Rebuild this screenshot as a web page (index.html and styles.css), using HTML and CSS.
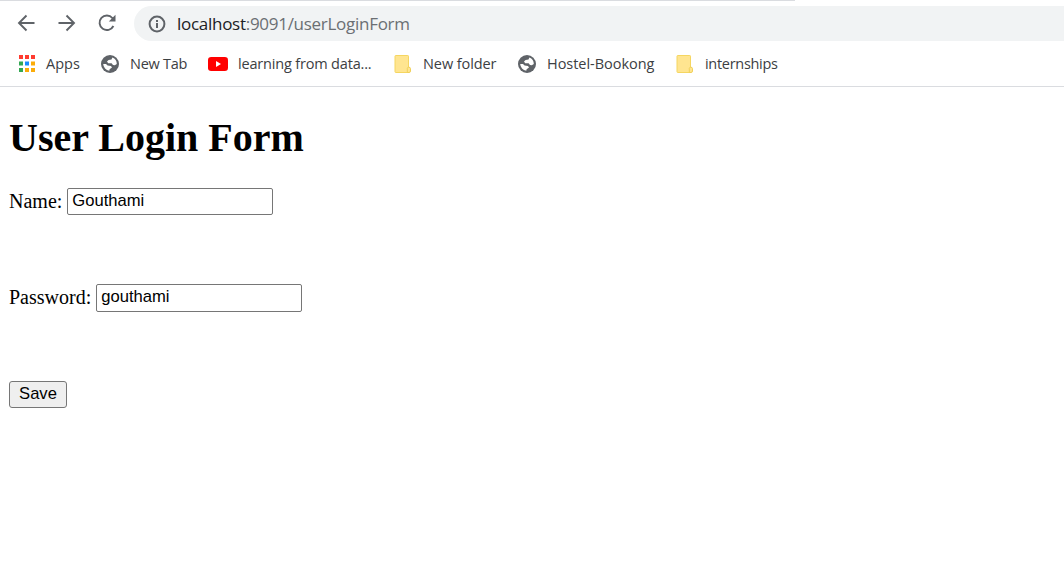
FILE: index.html
```html
<!DOCTYPE html>
<html lang="en">
<head>
<meta charset="utf-8">
<title>User Login Form</title>
<link rel="stylesheet" href="styles.css">
</head>
<body>
<svg class="defs" width="0" height="0" aria-hidden="true">
  <symbol id="globe" viewBox="0 0 18 18">
    <circle cx="9" cy="9" r="9" fill="#5f6368"/>
    <path d="M11.400 2.600 10.500 4.400 7.600 4.900 6 6.500 7.200 8.200H10.600L12 9.900 13.800 10.200 15.800 9A7 7 0 0 0 11.400 2.600ZM2.200 9A7 7 0 0 0 8.300 15.700L8.600 14.200 11 12.600 10 10.900 6.600 10.500 5 9Z" fill="#fff"/>
  </symbol>
  <symbol id="folder" viewBox="0 0 18 18">
    <path d="M1.700.5H13.800a.7.7 0 0 1 .7.7V17.500H1.700a.7.7 0 0 1-.7-.7V1.200a.7.7 0 0 1 .7-.7Z" fill="#ffe590" stroke="#f5d661"/>
    <path d="M13.300 17.500v-4.200q.2-1 1.400-1.200 1.800.2 1.800 1.400v2.500q0 1.500-1.500 1.500Z" fill="#ffe590" stroke="#f0d05a"/>
  </symbol>
</svg>
<header class="browser">
  <div class="tab-edge"></div>
  <div class="toolbar">
    <svg class="nav" viewBox="0 0 20 20"><path d="M17.500 9H2.500M9.500 1.500 2 9l7.500 7.500"/></svg>
    <svg class="nav" viewBox="0 0 20 20"><path d="M1.500 9h15M9.500 1.500 17 9 9.500 16.500"/></svg>
    <svg class="nav" viewBox="0 0 20 20"><path d="M16.400 12A7.300 7.300 0 1 1 15.400 4L17 5.600"/><path class="tip" d="M18.500.8V7.500H11.800Z"/></svg>
    <div class="address">
      <svg class="info" viewBox="0 0 18 18"><circle cx="9" cy="9" r="7.400"/><path d="M9 8v5M9 5v2"/></svg>
      <span class="url"><span class="host">localhost</span>:9091/userLoginForm</span>
    </div>
  </div>
  <nav class="bookmarks">
    <div class="bookmark apps">
      <svg class="icon" viewBox="0 0 18 18"><path fill="#ff3b30" d="M1 0h4v4H1zM7 0h4v4H7zM13 0h4v4h-4z"/><path fill="#34a853" d="M1 6.500h4v4H1zM1 13h4v4H1z"/><path fill="#1a8cff" d="M7 6.500h4v4H7z"/><path fill="#fbac09" d="M13 6.500h4v4h-4zM7 13h4v4H7zM13 13h4v4h-4z"/></svg>
      <span>Apps</span>
    </div>
    <div class="bookmark newtab"><svg class="icon"><use href="#globe"/></svg><span>New Tab</span></div>
    <div class="bookmark video">
      <svg class="icon wide" viewBox="0 0 20 14"><rect width="20" height="14" rx="3.200" fill="#f00"/><path d="M8 4v6l5-3z" fill="#fff"/></svg>
      <span>learning from data...</span>
    </div>
    <div class="bookmark newfolder"><svg class="icon"><use href="#folder"/></svg><span>New folder</span></div>
    <div class="bookmark hostel"><svg class="icon"><use href="#globe"/></svg><span>Hostel-Bookong</span></div>
    <div class="bookmark intern"><svg class="icon"><use href="#folder"/></svg><span>internships</span></div>
  </nav>
</header>
<main class="page">
  <h1>User Login Form</h1>
  <form>
    <div class="field"><label for="name">Name:</label><input id="name" type="text" value="Gouthami"></div>
    <div class="field second"><label for="password">Password:</label><input id="password" type="text" value="gouthami"></div>
    <button type="button">Save</button>
  </form>
</main>
</body>
</html>
```

FILE: styles.css
```css
* { box-sizing: border-box; }
body { margin: 0; height: 561px; overflow: hidden; background: #fff; color: #000; }
.defs { position: absolute; }
.browser { height: 87px; border-bottom: 1px solid #dadce0; font-family: "Open Sans", sans-serif; }
.tab-edge { width: 795px; height: 1px; background: #dadce0; }
.toolbar { display: flex; align-items: center; height: 45px; padding: 0 0 0 17px; }
.nav { width: 20px; height: 20px; margin-right: 20px; fill: none; stroke: #5f6368; stroke-width: 1.9; }
.nav .tip { fill: #5f6368; stroke: none; }
.address { display: flex; align-items: center; flex: 1; height: 35px; margin-left: -3px; padding-left: 14px; background: #f1f3f4; border-radius: 18px 0 0 18px; }
.info { width: 18px; height: 18px; margin-right: 11px; fill: none; stroke: #5f6368; stroke-width: 2; }
.url { font-size: 17px; letter-spacing: -0.28px; color: #6b6f73; white-space: nowrap; }
.host { color: #202124; }
.bookmarks { display: flex; height: 36px; padding-left: 18px; }
.bookmark { display: flex; align-items: center; flex: none; gap: 11px; font-size: 14.5px; letter-spacing: -0.18px; color: #3c4043; white-space: nowrap; }
.bookmark span { padding-bottom: 2px; }
.icon { flex: none; width: 18px; height: 18px; }
.wide { width: 20px; height: 14px; }
.apps { width: 83px; gap: 10px; letter-spacing: 0; }
.newtab { width: 107px; letter-spacing: -0.28px; }
.video { width: 186px; gap: 10px; }
.newfolder { width: 124px; letter-spacing: -0.08px; }
.hostel { width: 158px; letter-spacing: -0.03px; }
.intern { letter-spacing: -0.3px; }
.page { padding: 0 9px; font-family: "Liberation Serif", serif; font-size: 20px; }
h1 { margin: 27px 0 0; font-size: 40px; line-height: 48px; }
form { padding-top: 26px; }
.field { display: flex; height: 27px; gap: 5px; }
.field label { line-height: 27px; }
.second { height: 28px; margin: 69px 0; }
input { width: 206px; height: 100%; padding: 0 4px 2px; border: 1px solid #767676; border-radius: 2px; font: 16.600px "Liberation Sans", sans-serif; }
button { display: block; width: 58px; height: 27px; padding: 0 0 2px; border: 1px solid #767676; border-radius: 3px; background: #efefef; font: 16.600px "Liberation Sans", sans-serif; }
```
